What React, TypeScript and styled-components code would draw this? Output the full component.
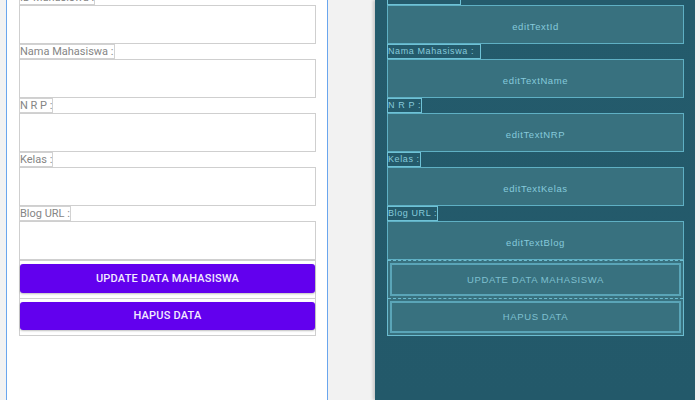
import React from 'react';
import styled, { createGlobalStyle, css } from 'styled-components';

// data field form mahasiswa
type Field = {
  label: string;
  id: string;
  width: number;
};

const fields: Field[] = [
  { label: 'ID Mahasiswa :', id: 'editTextId', width: 74 },
  { label: 'Nama Mahasiswa :', id: 'editTextName', width: 94 },
  { label: 'N R P :', id: 'editTextNRP', width: 32 },
  { label: 'Kelas :', id: 'editTextKelas', width: 33 },
  { label: 'Blog URL :', id: 'editTextBlog', width: 51 },
];

const buttons = ['UPDATE DATA MAHASISWA', 'HAPUS DATA'];

const GlobalStyle = createGlobalStyle`
  html, body {
    margin: 0;
    padding: 0;
    background: #f2f2f2;
    overflow: hidden;
  }
`;

const Editor = styled.div`
  display: flex;
  height: 400px;
  width: 700px;
  overflow: hidden;
  background: #f2f2f2;
`;

const DesignScreen = styled.div`
  margin-left: 6px;
  width: 320px;
  height: 400px;
  background: #ffffff;
  border-left: 1px solid #6aa6ee;
  border-right: 1px solid #6aa6ee;
  overflow: hidden;
`;

const BlueprintScreen = styled.div`
  margin-left: 47px;
  width: 320px;
  height: 400px;
  background: linear-gradient(180deg, #245b6c 0%, #23596a 100%);
  box-shadow: -2px 0 3px rgba(0, 0, 0, 0.18);
  overflow: hidden;
`;

const Form = styled.div`
  display: flex;
  flex-direction: column;
  margin: -10px 0 0 12px;
  width: 297px;
`;

const Label = styled.div<{ $bp?: boolean; $w: number }>`
  box-sizing: border-box;
  height: 15px;
  min-width: ${(p) => p.$w}px;
  align-self: flex-start;
  white-space: nowrap;
  ${(p) =>
    p.$bp
      ? css`
          border: 1px solid #6fc2d6;
          color: #86cadb;
          font: 9px/13px 'Liberation Sans', Arial, sans-serif;
          letter-spacing: 0.6px;
        `
      : css`
          border: 1px solid #d2d2d2;
          color: #858585;
          font: 11px/13px Roboto, sans-serif;
        `}
`;

const EditText = styled.div<{ $bp?: boolean }>`
  box-sizing: border-box;
  height: 39px;
  display: flex;
  align-items: center;
  justify-content: center;
  padding-top: 4px;
  ${(p) =>
    p.$bp
      ? css`
          border: 1px solid #5fb0c4;
          background: #38717f;
          color: #86cadb;
          font: 9.5px 'Liberation Sans', Arial, sans-serif;
          letter-spacing: 0.6px;
        `
      : css`
          border: 1px solid #cfcfcf;
          background: #ffffff;
        `}
`;

const ButtonGroup = styled.div<{ $bp?: boolean }>`
  display: flex;
  flex-direction: column;
  border: 1px solid ${(p) => (p.$bp ? '#6bbcd0' : '#cfcfcf')};
  border-top: none;
`;

const ButtonSlot = styled.div<{ $bp?: boolean }>`
  box-sizing: border-box;
  height: 37.5px;
  display: flex;
  flex-direction: column;
  ${(p) =>
    p.$bp
      ? css`
          border-top: 1px dashed #6bbcd0;
          background: #38717f;
          padding: 2px;
        `
      : css`
          border-top: 1px solid #cfcfcf;
          padding: 3px 0 5px 0;
        `}
`;

const Button = styled.div<{ $bp?: boolean }>`
  flex: 1;
  display: flex;
  align-items: center;
  justify-content: center;
  box-sizing: border-box;
  ${(p) =>
    p.$bp
      ? css`
          border: 2px solid #5aa5b8;
          color: #7fc0d0;
          font: 9.5px 'Liberation Sans', Arial, sans-serif;
          letter-spacing: 0.6px;
        `
      : css`
          background: #6200ee;
          border-radius: 3px;
          box-shadow: 0 1px 2px rgba(0, 0, 0, 0.25);
          color: #f2eaff;
          font: 500 11px Roboto, sans-serif;
          letter-spacing: 0.2px;
        `}
`;

const MahasiswaForm: React.FC<{ blueprint?: boolean }> = ({ blueprint }) => (
  <Form>
    {fields.map((f) => (
      <React.Fragment key={f.id}>
        <Label $bp={blueprint} $w={f.width}>
          {f.label}
        </Label>
        <EditText $bp={blueprint}>{blueprint ? f.id : null}</EditText>
      </React.Fragment>
    ))}
    <ButtonGroup $bp={blueprint}>
      {buttons.map((b) => (
        <ButtonSlot key={b} $bp={blueprint}>
          <Button $bp={blueprint}>{b}</Button>
        </ButtonSlot>
      ))}
    </ButtonGroup>
  </Form>
);

const App: React.FC = () => (
  <>
    <GlobalStyle />
    <Editor>
      <DesignScreen>
        <MahasiswaForm />
      </DesignScreen>
      <BlueprintScreen>
        <MahasiswaForm blueprint />
      </BlueprintScreen>
    </Editor>
  </>
);

export default App;
